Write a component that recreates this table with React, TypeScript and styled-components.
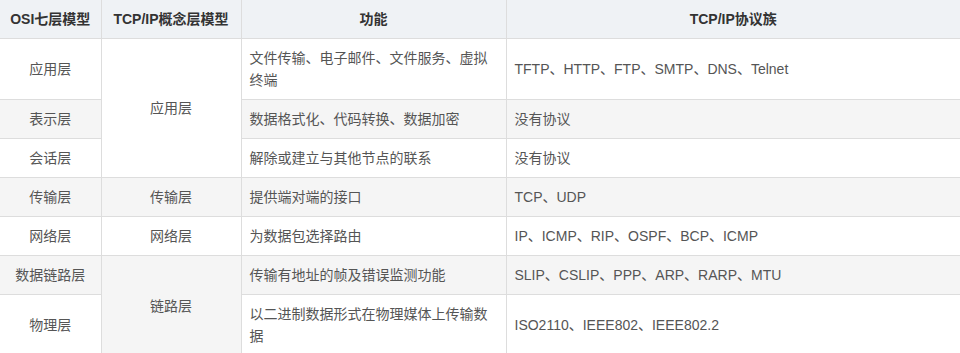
import React from "react";
import styled, { createGlobalStyle } from "styled-components";

const GlobalStyle = createGlobalStyle`
  html, body {
    margin: 0;
    padding: 0;
    background: #fff;
  }
  body {
    font-family: "Liberation Sans", "Noto Sans CJK SC", sans-serif;
    font-size: 14px;
    color: #555;
  }
`;

const Table = styled.table`
  width: 960px;
  border-collapse: collapse;
  table-layout: fixed;
`;

const HeadCell = styled.th`
  background-color: #eff2f5;
  color: #333;
  font-weight: 700;
  font-size: 14px;
  line-height: 22px;
  padding: 8px;
  text-align: center;
  border: 1px solid #dddddd;
  border-top: none;
  &:first-child {
    border-left: none;
  }
  &:last-child {
    border-right: none;
  }
`;

const Row = styled.tr<{ $striped?: boolean }>`
  background-color: ${(p) => (p.$striped ? "#f5f5f5" : "#fff")};
`;

const Cell = styled.td<{ $center?: boolean }>`
  padding: 8px;
  line-height: 22px;
  text-align: ${(p) => (p.$center ? "center" : "left")};
  vertical-align: middle;
  border: 1px solid #dddddd;
  word-break: break-all;
  &:first-child {
    border-left: none;
  }
  &:last-child {
    border-right: none;
  }
`;

type Layer = {
    osi: string;
    tcp?: { name: string; span: number };
    func: string;
    protocols: string;
};

const layers: Layer[] = [
    {
        osi: "应用层",
        tcp: { name: "应用层", span: 3 },
        func: "文件传输、电子邮件、文件服务、虚拟终端",
        protocols: "TFTP、HTTP、FTP、SMTP、DNS、Telnet"
    },
    { osi: "表示层", func: "数据格式化、代码转换、数据加密", protocols: "没有协议" },
    { osi: "会话层", func: "解除或建立与其他节点的联系", protocols: "没有协议" },
    {
        osi: "传输层",
        tcp: { name: "传输层", span: 1 },
        func: "提供端对端的接口",
        protocols: "TCP、UDP"
    },
    {
        osi: "网络层",
        tcp: { name: "网络层", span: 1 },
        func: "为数据包选择路由",
        protocols: "IP、ICMP、RIP、OSPF、BCP、ICMP"
    },
    {
        osi: "数据链路层",
        tcp: { name: "链路层", span: 2 },
        func: "传输有地址的帧及错误监测功能",
        protocols: "SLIP、CSLIP、PPP、ARP、RARP、MTU"
    },
    {
        osi: "物理层",
        func: "以二进制数据形式在物理媒体上传输数据",
        protocols: "ISO2110、IEEE802、IEEE802.2"
    }
];

const App: React.FC = () => {
    return (
      <>
        <GlobalStyle />
        <Table>
          <colgroup>
            <col style={{ width: 101 }} />
            <col style={{ width: 140 }} />
            <col style={{ width: 265 }} />
            <col />
          </colgroup>
          <thead>
            <tr>
              <HeadCell>OSI七层模型</HeadCell>
              <HeadCell>TCP/IP概念层模型</HeadCell>
              <HeadCell>功能</HeadCell>
              <HeadCell>TCP/IP协议族</HeadCell>
            </tr>
          </thead>
          <tbody>
            {layers.map((layer, i) => (
              <Row key={layer.osi} $striped={i % 2 === 1}>
                <Cell $center>{layer.osi}</Cell>
                {layer.tcp && (
                  <Cell $center rowSpan={layer.tcp.span}>
                    {layer.tcp.name}
                  </Cell>
                )}
                <Cell>{layer.func}</Cell>
                <Cell>{layer.protocols}</Cell>
              </Row>
            ))}
          </tbody>
        </Table>
      </>
    );
};

export default App;
